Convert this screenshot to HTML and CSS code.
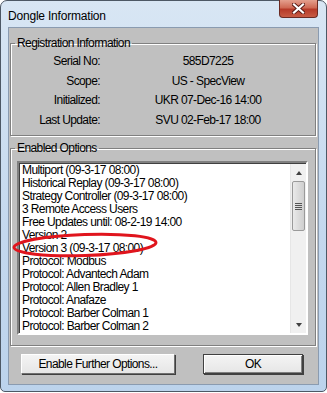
FILE: index.html
```html
<!DOCTYPE html>
<html lang="en">
<head>
    <meta charset="UTF-8">
    <title>Dongle Information</title>
    <link rel="stylesheet" href="styles.css">
</head>
<body>
    <div class="window">
        <div class="titlebar">
            <span class="title">Dongle Information</span>
            <div class="close">
                <svg width="13" height="11" viewBox="0 0 13 11">
                    <path d="M2 1.5 L11 9.5 M11 1.5 L2 9.5" stroke="#5a1a14" stroke-width="4" stroke-linecap="square"/>
                    <path d="M2 1.5 L11 9.5 M11 1.5 L2 9.5" stroke="#fff" stroke-width="2.2" stroke-linecap="square"/>
                </svg>
            </div>
        </div>

        <div class="client">
            <fieldset class="group reg">
                <legend>Registration Information</legend>
                <div class="info">
                    <span class="label">Serial No:</span><span class="value">585D7225</span>
                    <span class="label">Scope:</span><span class="value">US - SpecView</span>
                    <span class="label">Initialized:</span><span class="value">UKR 07-Dec-16 14:00</span>
                    <span class="label">Last Update:</span><span class="value">SVU 02-Feb-17 18:00</span>
                </div>
            </fieldset>

            <fieldset class="group opts">
                <legend>Enabled Options</legend>
                <div class="listbox">
                    <ul class="items">
                        <li>Multiport (09-3-17 08:00)</li>
                        <li>Historical Replay (09-3-17 08:00)</li>
                        <li>Strategy Controller (09-3-17 08:00)</li>
                        <li>3 Remote Access Users</li>
                        <li>Free Updates until: 08-2-19 14:00</li>
                        <li>Version 2</li>
                        <li>Version 3 (09-3-17 08:00)</li>
                        <li>Protocol: Modbus</li>
                        <li>Protocol: Advantech Adam</li>
                        <li>Protocol: Allen Bradley 1</li>
                        <li>Protocol: Anafaze</li>
                        <li>Protocol: Barber Colman 1</li>
                        <li>Protocol: Barber Colman 2</li>
                    </ul>
                    <div class="scrollbar">
                        <div class="arrow up"></div>
                        <div class="thumb"><span></span><span></span><span></span><span></span></div>
                        <div class="track"></div>
                        <div class="arrow down"></div>
                    </div>
                </div>
            </fieldset>

            <div class="buttons">
                <button class="btn wide">Enable Further Options...</button>
                <button class="btn ok">OK</button>
            </div>
        </div>

        <svg class="marker" width="160" height="34" viewBox="0 0 160 34">
            <ellipse cx="80" cy="17" rx="71" ry="10.5" fill="none" stroke="#e0151d" stroke-width="3" transform="rotate(-2 80 17)"/>
        </svg>
    </div>
</body>
</html>
```

FILE: styles.css
```css
* {
    margin: 0;
    padding: 0;
    box-sizing: border-box;
}

body {
    background: #fff;
    font-family: "Liberation Sans", Arial, sans-serif;
    font-size: 12px;
    color: #000;
}

.window {
    position: relative;
    width: 327px;
    height: 392px;
    border: 1px solid #4d5865;
    border-radius: 7px 7px 5px 5px;
    background: linear-gradient(to bottom, #d8e6f4, #c4d8ee 60%, #bcd3ec);
    padding: 0 7px 6px 7px;
    display: flex;
    flex-direction: column;
}

.titlebar {
    height: 26px;
    display: flex;
    align-items: flex-start;
    justify-content: space-between;
}

.title {
    margin-top: 8px;
    font-size: 12px;
    letter-spacing: -0.2px;
    color: #000;
}

.close {
    width: 39px;
    height: 18px;
    margin-top: -1px;
    margin-right: 1px;
    border: 1px solid #6b2a22;
    border-top: none;
    border-radius: 0 0 4px 4px;
    background: linear-gradient(to bottom, #e4a08e, #cf6a55 45%, #b63a28 55%, #c75b44);
    display: flex;
    align-items: center;
    justify-content: center;
}

.client {
    flex: 1;
    background: #c0c0c0;
    border: 1px solid #8a9bb0;
    padding: 0 2px 0 1px;
    display: flex;
    flex-direction: column;
    letter-spacing: -0.6px;
}

.group {
    border: 1px solid #808080;
    box-shadow: inset 1px 1px 0 #fff, 1px 1px 0 #fff;
    padding: 0;
    min-width: 0;
}

.group legend {
    margin-left: 4px;
    padding: 0 2px;
    line-height: 13px;
    font-size: 12px;
}

.reg {
    margin-top: 9px;
    height: 99px;
}

.info {
    display: grid;
    grid-template-columns: 89px 1fr;
    column-gap: 10px;
    row-gap: 6.5px;
    padding: 5px 9px 0 0;
    line-height: 13px;
}

.label {
    text-align: right;
}

.value {
    text-align: center;
}

.opts {
    margin-top: 6px;
    height: 204px;
}

.listbox {
    margin: 6px 7px 0 6px;
    height: 174px;
    background: #fff;
    border-style: solid;
    border-width: 2px;
    border-color: #808080 #fff #fff #808080;
    box-shadow: inset 1px 1px 0 #404040;
    display: flex;
}

.items {
    list-style: none;
    flex: 1;
    padding: 1px 0 0 3px;
    line-height: 13px;
    overflow: hidden;
    white-space: nowrap;
}

.scrollbar {
    width: 16px;
    background: #f0f0f0;
    border-left: 1px solid #e6e6e6;
    display: flex;
    flex-direction: column;
    margin: 1px 0 0;
}

.arrow {
    height: 17px;
    display: flex;
    align-items: center;
    justify-content: center;
}

.arrow::before {
    content: "";
    border-left: 3.5px solid transparent;
    border-right: 3.5px solid transparent;
}

.arrow.up::before {
    border-bottom: 4px solid #404040;
}

.arrow.down::before {
    border-top: 4px solid #404040;
}

.thumb {
    height: 50px;
    margin: 0 1px;
    border: 1px solid #9a9a9a;
    border-radius: 2px;
    background: linear-gradient(to right, #eaeaea, #dcdcdc 50%, #cfcfcf);
    display: flex;
    flex-direction: column;
    align-items: center;
    justify-content: center;
    gap: 1px;
}

.thumb span {
    width: 7px;
    height: 1px;
    background: #555;
}

.track {
    flex: 1;
}

.buttons {
    display: flex;
    justify-content: space-between;
    padding: 8px 13px 0 11px;
}

.btn {
    height: 20px;
    font-family: "Liberation Sans", Arial, sans-serif;
    font-size: 12px;
    letter-spacing: -0.6px;
    color: #000;
    background: linear-gradient(to bottom, #f4f4f4, #e6e6e6);
    border: 1px solid #707070;
    border-color: #fff #707070 #707070 #fff;
    box-shadow: 1px 1px 0 #404040;
}

.wide {
    width: 154px;
}

.ok {
    width: 100px;
    border: 1px solid #404040;
    box-shadow: inset 1px 1px 0 #fff, inset -1px -1px 0 #808080, 1px 1px 0 #404040;
}

.marker {
    position: absolute;
    left: 4px;
    top: 227px;
}
```
